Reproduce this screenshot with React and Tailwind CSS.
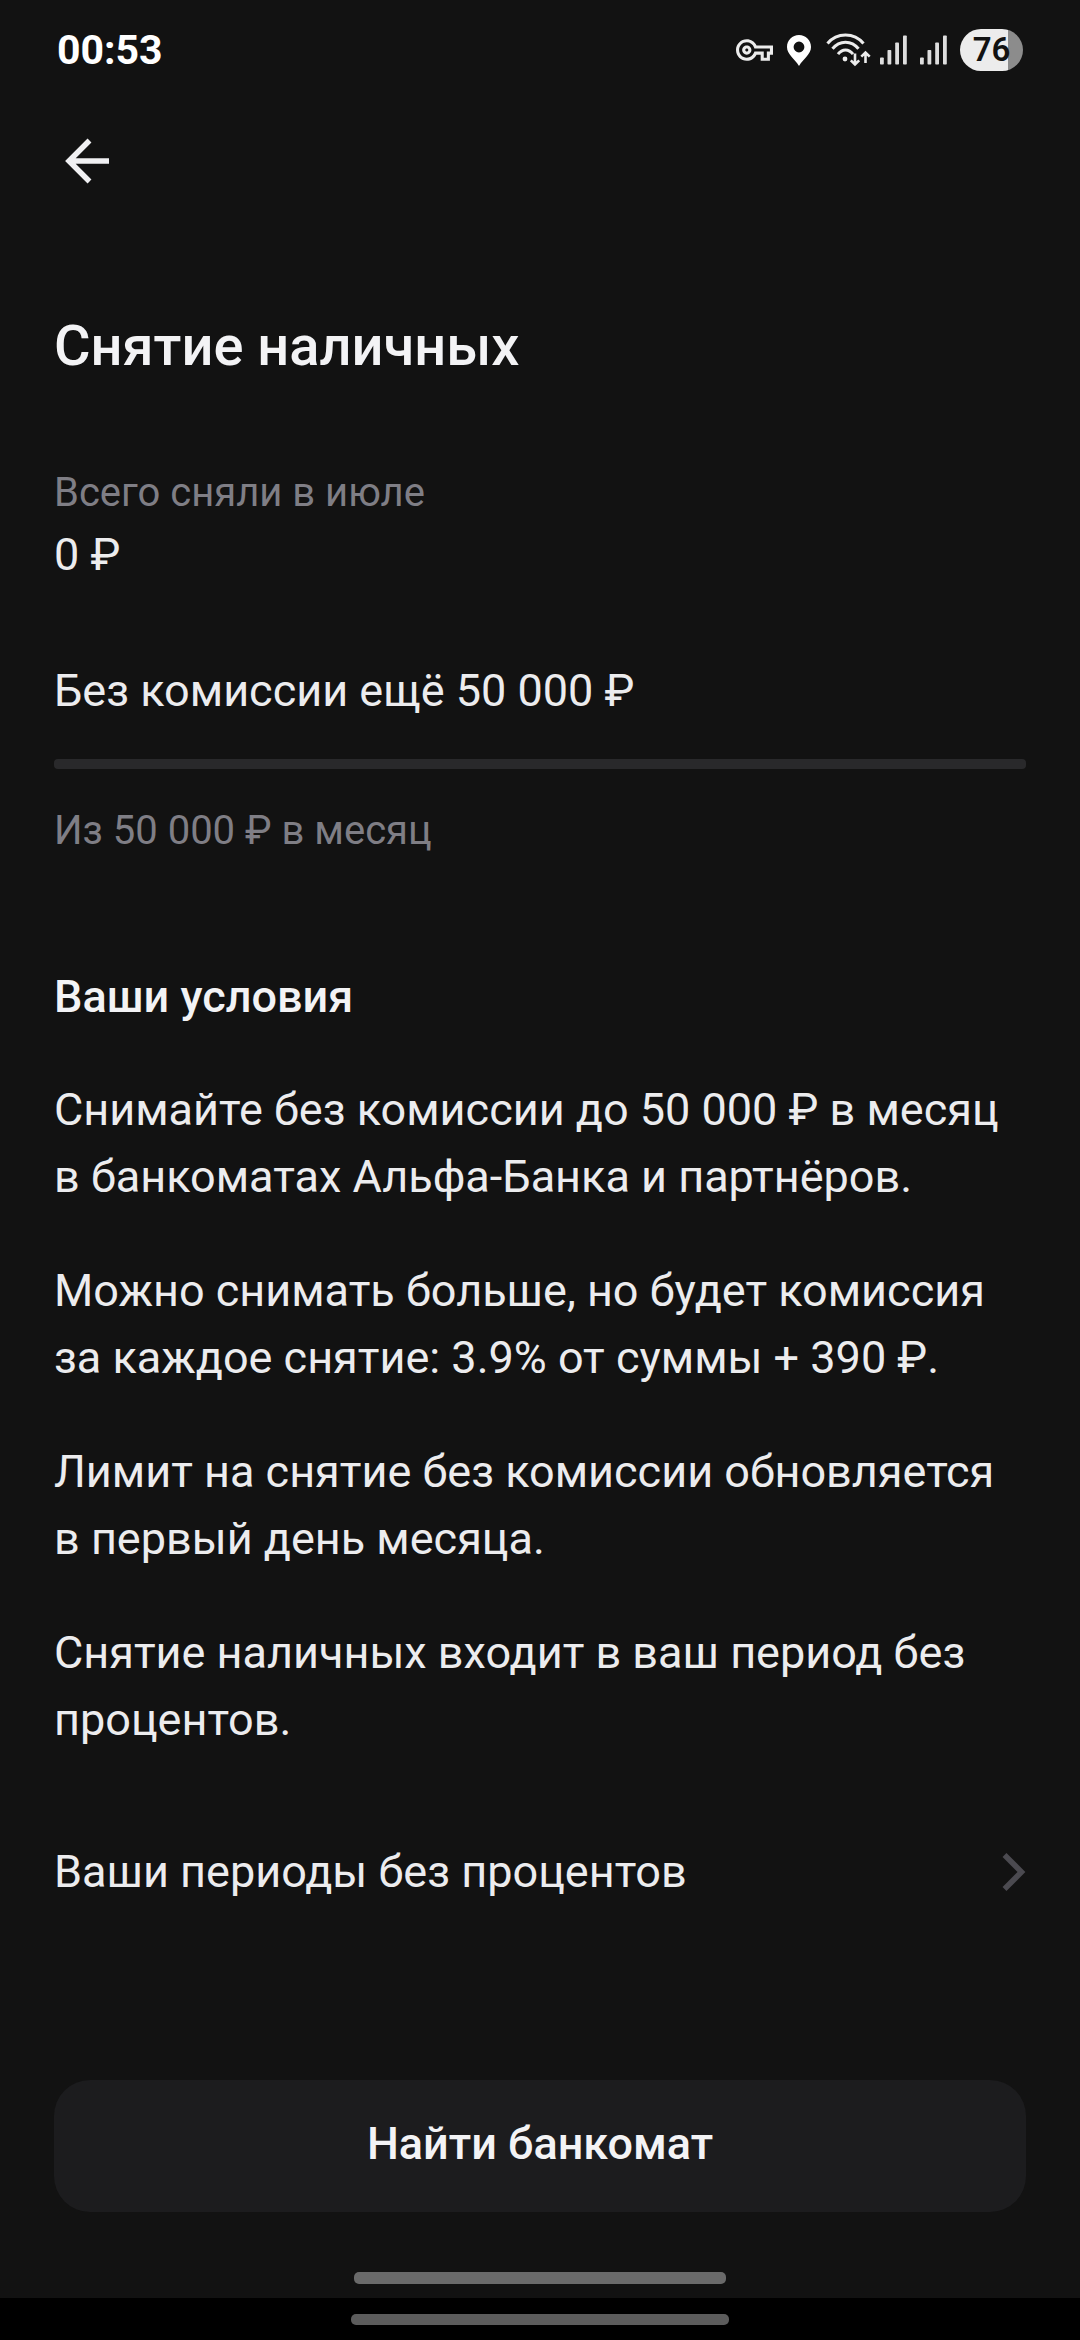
import React from "react";

const TERMS = [
  ["Снимайте без комиссии до 50 000 ₽ в месяц", "в банкоматах Альфа-Банка и партнёров."],
  ["Можно снимать больше, но будет комиссия", "за каждое снятие: 3.9% от суммы + 390 ₽."],
  ["Лимит на снятие без комиссии обновляется", "в первый день месяца."],
  ["Снятие наличных входит в ваш период без", "процентов."],
];

function KeyIcon() {
  return (
    <svg className="h-[22px] w-[37px]" viewBox="0 5 24 14" fill="#ececec" aria-hidden="true">
      <path d="M22 19h-6v-4h-2.680c-1.140 2.420-3.600 4-6.320 4-3.860 0-7-3.140-7-7s3.140-7 7-7c2.720 0 5.170 1.580 6.320 4H24v6h-2v4zm-4-2h2v-4h2v-2H11.940l-.23-.67C11.010 8.340 9.110 7 7 7c-2.760 0-5 2.240-5 5s2.240 5 5 5c2.110 0 4.010-1.340 4.710-3.330l.23-.67H18v4zM7 15c-1.650 0-3-1.350-3-3s1.350-3 3-3 3 1.350 3 3-1.350 3-3 3zm0-4c-.55 0-1 .45-1 1s.45 1 1 1 1-.45 1-1-.45-1-1-1z" />
    </svg>
  );
}

function PinIcon() {
  return (
    <svg className="h-[31px] w-[24px]" viewBox="0 0 24 31" aria-hidden="true">
      <path
        fill="#ffffff"
        fillRule="evenodd"
        d="M12 0C5.3 0 0 5.3 0 12c0 7.400 7.600 11.500 12 19 4.400-7.500 12-11.600 12-19C24 5.300 18.700 0 12 0Zm0 6.600a5.400 5.400 0 1 1 0 10.800 5.400 5.400 0 0 1 0-10.800Z"
      />
    </svg>
  );
}

function WifiIcon() {
  return (
    <svg className="h-[34px] w-[45px]" viewBox="0 0 45 34" fill="none" stroke="#ececec" aria-hidden="true">
      <path d="M1.500 10.500C11 -0.800 28 -0.800 37.500 10.500" strokeWidth="3" />
      <path d="M6.500 15.800C13.500 7 25.500 7 32.500 15.800" strokeWidth="3" />
      <path d="M12 21.200C16.200 15.600 22.800 15.600 27 21.200" strokeWidth="3" />
      <circle cx="19" cy="26" r="2.400" fill="#ececec" stroke="none" />
      <path d="M29 20.500V31M24.800 27.300L29 31.500L33.200 27.300" strokeWidth="2.600" />
      <path d="M39.500 30V19.500M35.300 23.700L39.500 19.500L43.700 23.700" strokeWidth="2.600" />
    </svg>
  );
}

function SignalIcon() {
  return (
    <svg className="h-[30px] w-[27px]" viewBox="0 0 27 30" fill="#dedede" aria-hidden="true">
      <rect x="0" y="22.500" width="3.800" height="7" rx="0.800" />
      <rect x="7.500" y="15" width="3.800" height="14.500" rx="0.800" />
      <rect x="15.200" y="7.500" width="3.800" height="22" rx="0.800" />
      <rect x="23" y="0.500" width="3.800" height="29" rx="0.800" />
    </svg>
  );
}

function StatusBar() {
  return (
    <div className="flex h-[100px] items-center justify-between px-[57px]">
      <time className="text-[41px] leading-[50px] font-bold text-white">00:53</time>
      <div className="flex items-center">
        <KeyIcon />
        <div className="ml-[14px]">
          <PinIcon />
        </div>
        <div className="ml-[15px]">
          <WifiIcon />
        </div>
        <div className="ml-[9px] flex gap-[13px]">
          <SignalIcon />
          <SignalIcon />
        </div>
        <div className="ml-[13px] flex h-[42px] w-[63px] items-center justify-center rounded-full bg-linear-to-r from-[#ececec] from-76% to-[#8c8c8c] to-76% text-[33px] leading-[42px] font-semibold text-[#121212]">
          76
        </div>
      </div>
    </div>
  );
}

export default function App() {
  return (
    <div className="flex min-h-screen flex-col bg-[#121212] font-['Roboto',sans-serif] text-[45px] leading-[64px] text-[#ececee]">
      <StatusBar />

      <header className="flex h-[122px] items-center px-[54px]">
        <button type="button" aria-label="Назад" className="flex size-[66px] items-center justify-center">
          <svg className="size-[46px]" viewBox="0 0 46 46" fill="none" stroke="#f0f0f2" strokeWidth="5.500" aria-hidden="true">
            <path d="M45 23H6M25.500 2.500L5 23L25.500 43.500" />
          </svg>
        </button>
      </header>

      <main className="flex flex-col px-[54px] pt-[92px]">
        <h1 className="text-[56px] leading-[64px] font-medium text-[#f3f3f5]">Снятие наличных</h1>

        <section className="mt-[89px]">
          <p className="text-[40px] leading-[52px] text-[#7f7e85]">Всего сняли в июле</p>
          <p className="mt-1">0 ₽</p>
        </section>

        <section className="mt-[72px]">
          <p id="limit">Без комиссии ещё 50 000 ₽</p>
          <div
            role="progressbar"
            aria-labelledby="limit"
            aria-valuenow={0}
            aria-valuemin={0}
            aria-valuemax={50000}
            className="mt-[36px] h-[10px] rounded-[4px] bg-[#29292b]"
          />
          <p className="mt-[36px] text-[40px] leading-[52px] text-[#7f7e85]">Из 50 000 ₽ в месяц</p>
        </section>

        <section className="mt-[108px]">
          <h2 className="font-medium text-[#f3f3f5]">Ваши условия</h2>
          <div className="mt-[47px] flex flex-col gap-[47px] leading-[67px]">
            {TERMS.map(([first, second]) => (
              <p key={first}>
                {first}
                <br />
                {second}
              </p>
            ))}
          </div>
        </section>

        <a href="#periods" className="mt-[87px] flex items-center justify-between">
          <span>Ваши периоды без процентов</span>
          <svg className="h-[40px] w-[24px]" viewBox="0 0 24 40" fill="none" stroke="#4b4a50" strokeWidth="5.500" aria-hidden="true">
            <path d="M2.500 3L19.500 20L2.500 37" />
          </svg>
        </a>
      </main>

      <footer className="mt-auto flex flex-col">
        <div className="flex flex-col px-[54px] pt-[60px]">
          <button type="button" className="h-[132px] rounded-[36px] bg-[#1c1c1e] pb-1 font-medium text-[#f3f3f5]">
            Найти банкомат
          </button>
        </div>
        <div className="mt-[60px] mb-[14px] h-[12px] w-[372px] self-center rounded-[5px] bg-[#6a6a6a]" />
        <div className="flex h-[42px] justify-center bg-black pt-[16px]">
          <div className="h-[11px] w-[378px] rounded-[5px] bg-[#5c5c5c]" />
        </div>
      </footer>
    </div>
  );
}
